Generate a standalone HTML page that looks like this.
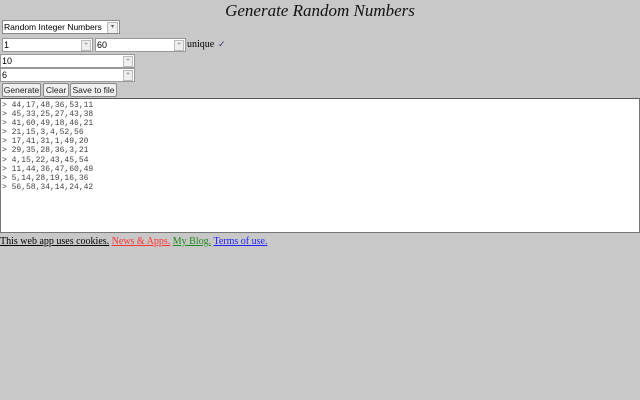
<!DOCTYPE html>
<html><head><style>
body{margin:0;width:640px;height:400px;background:#c8c8c8;position:relative;overflow:hidden;font-family:"Liberation Sans",sans-serif}
.a{position:absolute}
h1{position:absolute;top:0;left:0;width:640px;margin:0;text-align:center;font:italic 17px "Liberation Serif",serif;line-height:21px;color:#111}
.in{position:absolute;background:#fff;border:1px solid #999;height:12px;font-size:9px;line-height:12px;padding-left:1px;box-sizing:content-box;white-space:nowrap;overflow:hidden}
.sp{position:absolute;right:1px;top:1px;width:8px;height:9px;border:1px solid #bbb;background:#eee;font-size:6px;line-height:9px;text-align:center;color:#555}
.btn{position:absolute;top:83px;height:13px;border:1px solid #888;border-radius:2px;background:#f0f0f0;font-size:8.5px;line-height:13px;text-align:center;color:#222;white-space:nowrap;box-sizing:border-box;height:14px}
.ta{position:absolute;left:0;top:98px;width:640px;height:135px;background:#fff;border:1px solid #777;border-top-color:#555;font:8px/9.1px "Liberation Mono",monospace;color:#444;white-space:pre;padding:2px 0 0 1px;box-sizing:border-box}
.ft{position:absolute;left:0;top:236px;font:10px "Liberation Serif",serif;color:#000;white-space:nowrap}
.ft span{text-decoration:underline}
</style></head><body>
<h1>Generate Random Numbers</h1>
<div class="in" style="left:2px;top:20px;width:115px;border-color:#888;font-size:8.5px">Random Integer Numbers<div class="sp" style="top:1px;height:10px;width:9px">▾</div></div>
<div class="in" style="left:2px;top:38px;width:88px">1<div class="sp">÷</div></div>
<div class="in" style="left:95px;top:38px;width:88px">60<div class="sp">÷</div></div>
<div class="a" style="left:187px;top:39px;font:10px 'Liberation Serif',serif">unique</div>
<div class="a" style="left:218px;top:39px;font-size:9px;color:#336">✓</div>
<div class="in" style="left:0;top:54px;width:132px">10<div class="sp">÷</div></div>
<div class="in" style="left:0;top:68px;width:132px">6<div class="sp">÷</div></div>
<div class="btn" style="left:2px;width:39px">Generate</div>
<div class="btn" style="left:43px;width:26px">Clear</div>
<div class="btn" style="left:70px;width:47px">Save to file</div>
<div class="ta">&gt; 44,17,48,36,53,11
&gt; 45,33,25,27,43,38
&gt; 41,60,49,18,46,21
&gt; 21,15,3,4,52,56
&gt; 17,41,31,1,49,20
&gt; 29,35,28,36,3,21
&gt; 4,15,22,43,45,54
&gt; 11,44,36,47,60,49
&gt; 5,14,28,19,16,36
&gt; 56,58,34,14,24,42</div>
<div class="ft"><span>This web app uses cookies.</span> <span style="color:#f33">News &amp; Apps.</span> <span style="color:#282">My Blog.</span> <span style="color:#22f">Terms of use.</span></div>
</body></html>
